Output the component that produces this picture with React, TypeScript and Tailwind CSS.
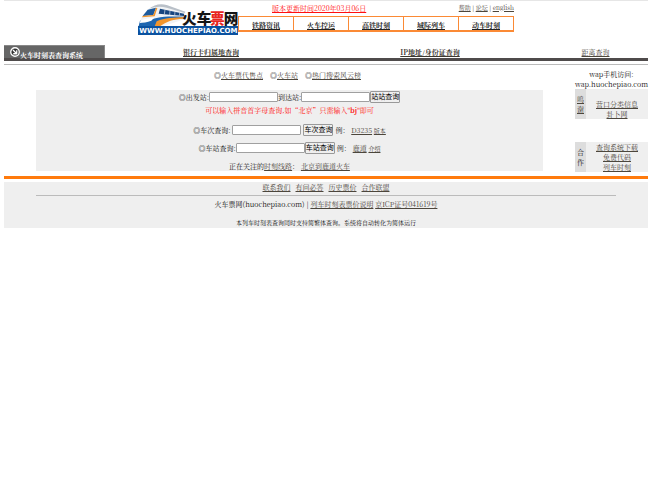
import type { ReactNode } from 'react';
import { clsx } from 'clsx';

const tabs = ['铁路资讯', '火车控运', '高铁时刻', '城际列车', '动车时刻'];
const footerLinks = ['联系我们', '有问必答', '历史票价', '合作联盟'];
const partners = ['查询系统下载', '免费代码', '列车时刻'];

function Link({ children, className }: { children: ReactNode; className?: string }) {
  return (
    <a href="#" className={clsx('underline', className ?? 'text-[#4c463c]')}>
      {children}
    </a>
  );
}

function Field({ id }: { id: string }) {
  return (
    <input
      id={id}
      type="text"
      className="h-[10px] w-[69px] rounded-[1px] border border-[#a0a0a0] bg-white px-px text-[7px] outline-none"
    />
  );
}

function Submit({ children }: { children: ReactNode }) {
  return (
    <button
      type="submit"
      className="h-3 rounded-[1px] border border-[#999] bg-[#efefef] font-['Liberation_Sans','Noto_Sans_CJK_SC',sans-serif] text-[7px] leading-[10px] whitespace-nowrap text-black"
    >
      {children}
    </button>
  );
}

function Logo() {
  return (
    <svg viewBox="0 0 300 93" className="h-[31px] w-[100px] shrink-0" role="img" aria-label="火车票网">
      {/* body and roof */}
      <path d="M2 66 C6 46 14 34 34 16 C46 6 64 0 82 3 L142 24 L140 46 L76 66 Z" fill="#f1f3f5" />
      <path d="M32 15 C48 2 66 -2 86 3 L142 23 L140 27 L86 11 C66 6 50 8 32 15 Z" fill="#b9c0c8" />
      {/* windscreen */}
      <path d="M14 36 L29 17 L54 11 L46 33 Z" fill="#1d5a9c" />
      <path d="M14 36 L46 33 L54 11 L58 12 L50 37 L12 40 Z" fill="#f2952b" />
      {/* side windows */}
      <path d="M66 14 L138 29 L138 36 L62 29 Z" fill="#17457f" />
      <path d="M81 17 L79 31 M96 20 L95 33 M111 23 L110 34 M125 26 L124 35" stroke="#dfe6ee" strokeWidth="2" />
      {/* lower stripes */}
      <path d="M6 50 C20 48 40 47 56 42 C80 36 110 38 140 38 L138 43 C104 44 82 50 62 67 L2 67 Z" fill="#1e66b0" />
      <path d="M8 49 C22 44 38 44 50 40 L40 50 C28 55 14 56 5 57 Z" fill="#fff" />
      <path d="M56 52 C80 41 108 41 138 39 L136 44 C108 45 84 52 66 67 L50 67 Z" fill="#f2952b" />
      <g fontFamily="'Noto Sans CJK SC', sans-serif" fontWeight="900" fontSize="44">
        <text x="132" y="61" fill="#151515">火车</text>
        <text x="216" y="61" fill="#e8261e">票</text>
        <text x="257" y="61" fill="#151515">网</text>
      </g>
      <rect y="66" width="300" height="27" fill="#0b52a0" />
      <text x="4" y="87" fill="#fff" fontFamily="'DejaVu Sans', sans-serif" fontWeight="700" fontSize="21">
        WWW.HUOCHEPIAO.COM
      </text>
    </svg>
  );
}

function Header() {
  return (
    <header className="flex justify-center border-t border-[#e6e6e6] pt-[3px]">
      <Logo />
      <div className="flex flex-col">
        <div className="flex h-3 items-center justify-between pb-[5px] pl-[34px] leading-[10px]">
          <Link className="text-[#ff1010]">版本更新时间2020年03月06日</Link>
          <span className="text-[6px]">
            <Link>帮助</Link> | <Link>论坛</Link> | <Link>english</Link>
          </span>
        </div>
        <nav className="flex border-t border-b-2 border-l border-[#fb8a35]">
          {tabs.map((tab) => (
            <div key={tab} className="flex h-[13px] w-[55px] items-center justify-center border-r border-[#fb8a35] pt-[2px]">
              <Link className="font-bold text-[#222]">{tab}</Link>
            </div>
          ))}
        </nav>
      </div>
    </header>
  );
}

function SystemNav() {
  return (
    <>
      <nav className="mt-[10px] grid grid-cols-[101px_212fr_226fr_105fr] items-center border-b-[3px] border-[#4f4b4b] text-center">
        <div className="flex h-[13px] items-center border-t border-r border-[#888] bg-[#666] pl-[6px] font-bold text-white">
          <svg viewBox="0 0 20 20" className="size-[10px] shrink-0" aria-hidden="true">
            <circle cx="10" cy="10" r="8.5" fill="#333" stroke="#fff" strokeWidth="2.6" />
            <path d="M6 6 L13 13 M13.5 6.5 V13.5 H6.5" fill="none" stroke="#fff" strokeWidth="2.6" />
          </svg>
          <span className="pt-[6px]">火车时刻表查询系统</span>
        </div>
        <Link className="font-bold text-[#3c3830]">银行卡归属地查询</Link>
        <Link className="font-bold text-[#3c3830]">IP地址/身份证查询</Link>
        <Link>距离查询</Link>
      </nav>
      <div className="mt-[3px] border-t border-[#bbb]" />
    </>
  );
}

function SearchPanel() {
  return (
    <main className="min-w-0 flex-1 px-8">
      <div className="flex h-[25px] items-center justify-center gap-[7px] pr-1 pb-[5px]">
        <span>◎<Link>火车票代售点</Link></span>
        <span>◎<Link>火车站</Link></span>
        <span>◎<Link>热门搜索风云榜</Link></span>
      </div>
      <div className="flex h-[81px] flex-col items-center bg-[#efefef]">
        <form className="flex h-[13px] items-center">
          <label htmlFor="from">◎出发站:</label>
          <Field id="from" />
          <label htmlFor="to">到达站:</label>
          <Field id="to" />
          <Submit>站站查询</Submit>
        </form>
        <p className="h-5 pt-[2px] text-[#ff1010]">
          可以输入拼音首字母查询,如“北京”只需输入"<b>bj</b>"即可
        </p>
        <form className="flex h-[14px] items-center gap-[2px]">
          <label htmlFor="train">◎车次查询:</label>
          <Field id="train" />
          <Submit>车次查询</Submit>
          <span>例： <Link>D3235</Link> <span className="text-[6px]"><Link>版本</Link></span></span>
        </form>
        <form className="mt-1 flex h-[14px] items-center">
          <label htmlFor="station">◎车站查询:</label>
          <Field id="station" />
          <Submit>车站查询</Submit>
          <span className="pl-[2px]">例： <Link>鹿道</Link> <span className="text-[6px]"><Link>介绍</Link></span></span>
        </form>
        <p className="pt-[6px]">
          正在关注的<Link>时刻线路</Link>： <Link>北京到鹿道火车</Link>
        </p>
      </div>
    </main>
  );
}

function Sidebar() {
  return (
    <aside className="w-[73px] shrink-0 pt-1 text-center">
      <p>wap手机访问:</p>
      <p className="whitespace-nowrap">wap.huochepiao.com</p>
      <section className="flex h-[30px] bg-[#efefef]">
        <div className="flex w-[11px] items-center bg-[#ddd] px-[2px]"><Link>鸣谢</Link></div>
        <div className="flex flex-1 flex-col items-center justify-end">
          <Link>营口分类信息</Link>
          <Link>卦卜网</Link>
        </div>
      </section>
      <section className="mt-[23px] flex h-[30px] bg-[#efefef]">
        <div className="flex w-[11px] items-center bg-[#ddd] px-[2px]">合作</div>
        <div className="flex flex-1 flex-col items-center">
          {partners.map((name) => <Link key={name}>{name}</Link>)}
        </div>
      </section>
    </aside>
  );
}

function Footer() {
  return (
    <footer className="mt-1 border-t-[3px] border-[#ff7a0c] text-center">
      <div className="mt-[3px] h-[46px] bg-[#efefef]">
        <div className="flex h-[13px] items-center justify-center gap-[5px] pb-[3px]">
          {footerLinks.map((name) => <Link key={name}>{name}</Link>)}
        </div>
        <hr className="mx-8 border-[#bbb]" />
        <p className="pt-[3px]">
          火车票网(huochepiao.com) | <Link>列车时刻表票价说明</Link> <Link>京ICP证号041619号</Link>
        </p>
        <p className="pt-[9px] text-[6px]">本列车时刻表查询同时支持简繁体查询。系统将自动转化为简体运行</p>
      </div>
    </footer>
  );
}

export default function App() {
  return (
    <div className="bg-white pr-[2px] pl-1 font-['Noto_Serif_CJK_SC','Noto_Serif',serif] text-[7px] leading-[10px] text-[#111]">
      <Header />
      <SystemNav />
      <div className="flex">
        <SearchPanel />
        <Sidebar />
      </div>
      <Footer />
    </div>
  );
}
